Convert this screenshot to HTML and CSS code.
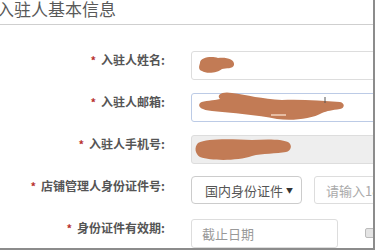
FILE: index.html
```html
<!DOCTYPE html>
<html lang="zh-CN">
<head>
    <meta charset="UTF-8">
    <meta name="viewport" content="width=device-width, initial-scale=1.0">
    <title>入驻人基本信息</title>
    <link rel="stylesheet" href="styles.css">
</head>
<body>
    <div class="panel">
        <div class="title">入驻人基本信息</div>
        <div class="form">
            <div class="row">
                <div class="label"><span class="star">*</span>入驻人姓名:</div>
                <div class="input wide">
                    <svg class="mask" width="60" height="29" viewBox="0 0 60 29">
                        <path d="M8 12 C8 6 20 5 26 7 C34 6 43 8 42 14 C41 18 34 17 30 18 C26 22 14 23 10 20 C6 19 7 15 8 12 Z"/>
                    </svg>
                </div>
            </div>
            <div class="row">
                <div class="label"><span class="star">*</span>入驻人邮箱:</div>
                <div class="input wide focus">
                    <svg class="mask" width="180" height="34" viewBox="0 0 180 34">
                        <path d="M8 12 C12 9 22 10 28 8 C24 4 30 0 40 2 C55 4 70 8 90 9 C110 8 130 10 148 11 C153 12 153 17 148 18 C140 19 135 20 130 22 C120 28 100 30 85 28 C65 24 40 22 20 20 C10 19 5 16 8 12 Z"/>
                        <path class="gap" d="M79 24 L94 24"/>
                        <path class="caret" d="M133 6 L133 12"/>
                    </svg>
                </div>
            </div>
            <div class="row">
                <div class="label"><span class="star">*</span>入驻人手机号:</div>
                <div class="input wide disabled">
                    <svg class="mask" width="110" height="29" viewBox="0 0 110 29">
                        <path d="M6 8 C15 3 40 4 60 5 C75 4 90 4 96 7 C101 10 99 16 94 17 C85 19 70 18 60 21 C45 26 20 26 8 22 C3 19 2 12 6 8 Z"/>
                    </svg>
                </div>
            </div>
            <div class="row">
                <div class="label"><span class="star">*</span>店铺管理人身份证件号:</div>
                <div class="select">
                    <span>国内身份证件</span>
                    <span class="arrow">▼</span>
                </div>
                <div class="input idno"><span class="hint">请输入18位身份证号</span></div>
            </div>
            <div class="row">
                <div class="label"><span class="star">*</span>身份证件有效期:</div>
                <div class="input date"><span class="hint dark">截止日期</span></div>
                <span class="check"></span>
            </div>
        </div>
    </div>
</body>
</html>
```

FILE: styles.css
```css
body{
    margin:0;
    background-color:#fff;
    font-family:"Noto Sans CJK SC","Microsoft YaHei",sans-serif;
    color:#555;
}
.panel{
    width:373px;
    height:248px;
    border-right:2px solid #8c8c8c;
    border-bottom:2px solid #8c8c8c;
    overflow:hidden;
}
.title{
    height:24px;
    margin-left:-3px;
    border-bottom:1px solid #cfcfcf;
    font-size:17px;
    line-height:18px;
    color:#595959;
}
.form{
    padding-top:26px;
}
.row{
    display:flex;
    align-items:flex-start;
    height:29px;
    margin-bottom:13px;
    white-space:nowrap;
}
.label{
    flex:none;
    width:165px;
    padding-right:26px;
    text-align:right;
    font-size:12px;
    font-weight:bold;
    line-height:18px;
    color:#555;
}
.star{
    margin-right:5px;
    color:#b8312f;
    font-size:11px;
}
.input{
    box-sizing:border-box;
    flex:none;
    display:flex;
    align-items:center;
    height:29px;
    border:1px solid #ddd;
    border-radius:3px;
    background-color:#fff;
}
.input.wide{
    width:200px;
}
.input.focus{
    border-color:#bccbe6;
}
.input.disabled{
    background-color:#eee;
    border-color:#ddd;
}
.mask{
    display:block;
    overflow:visible;
}
.mask path{
    fill:#c27b55;
}
.mask path.gap{
    fill:none;
    stroke:#f2d2bd;
    stroke-width:1.5;
}
.mask path.caret{
    fill:none;
    stroke:#555;
    stroke-width:1;
}
.select{
    box-sizing:border-box;
    flex:none;
    display:flex;
    align-items:center;
    justify-content:space-between;
    width:111px;
    height:28px;
    margin-top:-1px;
    padding:0 8px 0 13px;
    border:1px solid #ccc;
    border-radius:4px;
    font-size:13px;
    color:#555;
}
.arrow{
    font-size:7px;
    color:#333;
}
.input.idno{
    width:100px;
    height:28px;
    margin-top:-1px;
    margin-left:12px;
    padding-left:11px;
}
.hint{
    font-size:13px;
    color:#aaa;
}
.hint.dark{
    color:#999;
}
.input.date{
    width:147px;
    padding-left:10px;
}
.check{
    flex:none;
    box-sizing:border-box;
    width:10px;
    height:10px;
    margin-top:9px;
    margin-left:27px;
    border:1px solid #bbb;
    border-radius:2px;
    background-color:#e4e4e4;
}
```
